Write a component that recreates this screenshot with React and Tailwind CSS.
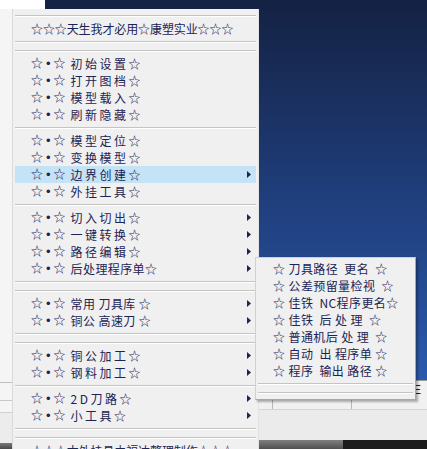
import React from 'react';

// Main popup menu entries: sep = separator line, arrow = has submenu
const mainItems = [
  { sep: true },
  { title: '☆☆☆天生我才必用☆康塑实业☆☆☆' },
  { sep: true },
  { sep: true },
  { text: '初始设置☆' },
  { text: '打开图档☆' },
  { text: '模型载入☆' },
  { text: '刷新隐藏☆' },
  { sep: true },
  { text: '模型定位☆' },
  { text: '变换模型☆' },
  { text: '边界创建☆', arrow: true, active: true },
  { text: '外挂工具☆' },
  { sep: true },
  { text: '切入切出☆', arrow: true },
  { text: '一键转换☆', arrow: true },
  { text: '路径编辑☆', arrow: true },
  { tight: '后处理程序单☆', arrow: true },
  { sep: true },
  { sep: true },
  { tight: '常用 刀具库 ☆', arrow: true },
  { tight: '铜公 高速刀 ☆', arrow: true },
  { sep: true },
  { sep: true },
  { text: '铜公加工☆', arrow: true },
  { text: '钢料加工☆', arrow: true },
  { sep: true },
  { text: '2D刀路☆', arrow: true },
  { text: '小工具☆', arrow: true },
  { sep: true },
  { sep: true },
  { title: '☆☆☆本外挂具由福达整理制作☆☆☆' },
];

const subItems = [
  '☆ 刀具路径  更名  ☆',
  '☆ 公差预留量检视  ☆',
  '☆ 佳铁  NC程序更名☆',
  '☆ 佳铁  后 处 理  ☆',
  '☆ 普通机后 处 理  ☆',
  '☆ 自动  出 程序单 ☆',
  '☆ 程序  输出 路径 ☆',
];

const Arrow = () => (
  <svg width="4" height="7" viewBox="0 0 4 7" className="shrink-0">
    <polygon points="0,0 4,3.5 0,7" fill="#1c2454" />
  </svg>
);

const Separator = () => (
  <div className="h-[9px] flex items-center">
    <div className="w-full border-t border-[#c4c4c4] border-b border-b-white" />
  </div>
);

const Prefix = () => (
  <span className="tracking-[3px]">
    ☆<span className="text-[13px] font-['Liberation_Sans',sans-serif]">•</span>☆
  </span>
);

const MenuItem = ({ item }) => {
  if (item.sep) return <Separator />;
  return (
    <div
      className={`h-[17px] flex items-center pl-[16px] pr-[5px] whitespace-pre ${
        item.active ? 'bg-[#c5e3f6]' : ''
      }`}
    >
      <div className="flex-1 flex items-center">
        {item.title && <span className="tracking-[-0.1px]">{item.title}</span>}
        {item.text && (
          <>
            <Prefix />
            <span className="ml-[2px] tracking-[2.5px]">{item.text}</span>
          </>
        )}
        {item.tight && (
          <>
            <Prefix />
            <span className="ml-[2px] tracking-[0.4px]">{item.tight}</span>
          </>
        )}
      </div>
      {item.arrow && <Arrow />}
    </div>
  );
};

export default function App() {
  return (
    <div className="relative w-[427px] h-[449px] overflow-hidden bg-white text-[12px] leading-none text-[#1c2454] font-['Noto_Sans_CJK_SC','Liberation_Sans',sans-serif]">
      {/* desktop behind the menu */}
      <div className="flex h-full">
        <div className="w-[45px] flex flex-col bg-[#f5f5f5]">
          <div className="h-[9px] bg-white" />
          <div className="flex-1" />
          <div className="h-[18px] border-t border-[#bdbdbd]" />
          <div className="h-[12px] border-t border-[#c8c8c8]" />
          <div className="h-[31px] border-t border-[#d0d0d0] bg-[#ececec]" />
          <div className="h-[6px] bg-gradient-to-b from-[#7a7a7a] to-[#4a4a4a]" />
        </div>
        <div className="flex-1 flex flex-col">
          <div className="h-[380px] bg-gradient-to-b from-[#142243] via-[#1f3d7a] to-[#2b5aac]" />
          <div className="flex-1 flex flex-col bg-[#f1f1f1]">
            <div className="h-[30px] flex border-b border-[#d4d4d4] border-t border-t-[#9a9a9a]">
              <div className="w-[228px] border-r border-[#b8b8b8]" />
              <div className="w-[79px] border-r border-[#b8b8b8]" />
              <div className="flex-1 flex justify-end pr-[6px] pt-[3px] text-[#222] font-['Liberation_Sans',sans-serif]">E</div>
            </div>
            <div className="flex-1 bg-[#ebebeb]" />
            <div className="h-[9px] flex">
              <div className="w-[298px] bg-gradient-to-b from-[#808080] to-[#505050]" />
              <div className="flex-1 bg-[#1c1c1c]" />
            </div>
          </div>
        </div>
      </div>

      {/* main popup menu */}
      <div className="absolute left-[12px] top-[9px] w-[246px] h-[460px] bg-[#f0f0f0] border-l border-[#dadada] pt-[2px] px-[2px] shadow-[1px_0_0_#e4e4e4]">
        {mainItems.map((item, i) => (
          <MenuItem key={i} item={item} />
        ))}
      </div>

      {/* submenu */}
      <div className="absolute left-[255px] top-[257px] w-[161px] h-[143px] bg-[#f0f0f0] border border-[#d0d0d0] border-r-[#a8a8a8] border-b-[#a8a8a8] shadow-[2px_2px_2px_rgba(0,0,0,0.3)] pt-[2px] px-[2px]">
        {subItems.map((s) => (
          <div key={s} className="h-[17px] flex items-center pl-[15px] whitespace-pre tracking-[0.4px]">
            {s}
          </div>
        ))}
        <Separator />
        <Separator />
      </div>
    </div>
  );
}
